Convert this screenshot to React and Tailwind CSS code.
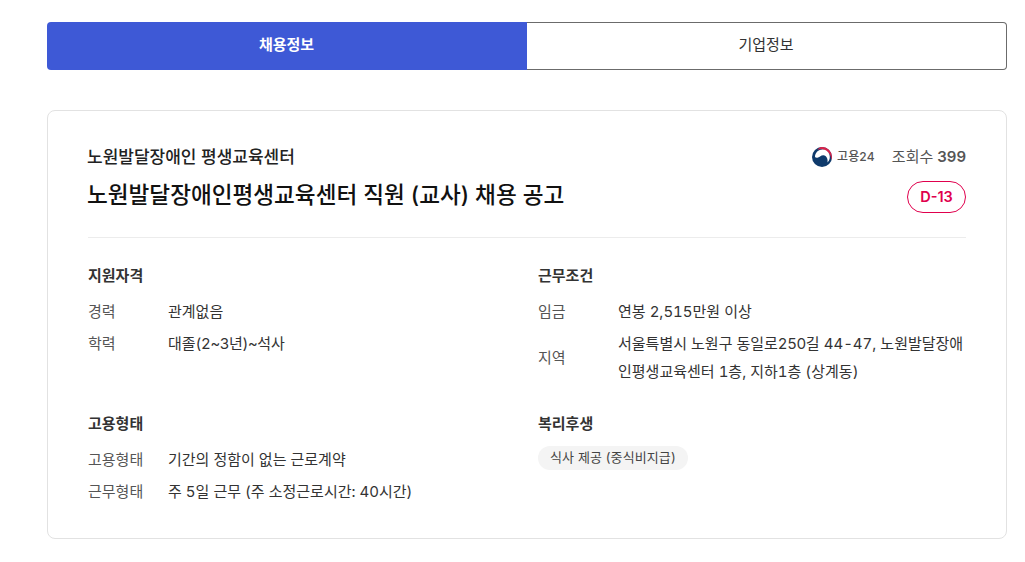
const Row = ({ label, children, center, className = "" }) => (
  <div className={`flex ${center ? "items-center" : "items-start"} ${className}`}>
    <div className="w-[80px] shrink-0 text-[15px] leading-[28px] text-[#555]">{label}</div>
    <div className="text-[15px] leading-[28px] text-[#333] flex-1 whitespace-nowrap tabular-nums">{children}</div>
  </div>
);

const Head = ({ children }) => (
  <h3 className="text-[15px] leading-[28px] font-semibold text-[#333] mb-[8px]">{children}</h3>
);

export default function App() {
  return (
    <div className="bg-white h-[562px] overflow-hidden px-[47px] pt-[22px] w-[1025px]" style={{ fontFamily: 'Inter, "Noto Sans CJK KR", sans-serif' }}>
      <div className="flex h-[48px] w-[960px]">
        <div className="w-[480px] bg-[#3e59d6] rounded-l-[4px] flex items-center justify-center text-white text-[15px] font-semibold pb-[1px] pr-[1px]">채용정보</div>
        <div className="w-[480px] bg-white border border-[#6b6b6b] border-l-0 rounded-r-[4px] flex items-center justify-center text-[#333] text-[15px] pb-[1px] pr-[1px]">기업정보</div>
      </div>

      <div className="mt-[40px] w-[960px] h-[429px] border border-[#e2e2e2] rounded-[8px] px-[40px] pt-[32px]">
        <div className="flex justify-between h-[95px] border-b border-[#ececec]">
          <div>
            <div className="text-[17px] leading-[28px] font-medium text-[#222] -ml-[1px]">노원발달장애인 평생교육센터</div>
            <div className="text-[22.6px] leading-[32px] mt-[8px] font-medium text-[#111] -ml-[1px]">노원발달장애인평생교육센터 직원 (교사) 채용 공고</div>
          </div>
          <div className="flex flex-col items-end">
            <div className="flex items-center h-[28px]">
              <svg width="20" height="20" viewBox="0 0 20 20" className="mr-[5px]">
                <circle cx="10" cy="10" r="10" fill="#0f3a6b" />
                <path d="M9.5 0A10 10 0 0 1 20 10C20 11 19.9 12 19.5 13C19.2 7.5 15 2.8 9.5 2.3C7.5 2.2 6.5 2.5 5.5 3C6.5 1 8 0.2 9.5 0Z" fill="#d8234a" />
                <path d="M3 10C3 5.6 6.5 2.6 10.5 2.6C14.5 2.6 17.8 6 17.8 10C17.8 12 17 14 15.5 15.5C16.2 12 14.5 8.5 11.5 8.2C9 8 8 10 6 10.6C4.8 11 3.6 10.8 3 10Z" fill="#fff" />
              </svg>
              <span className="text-[12px] font-medium text-[#555] tracking-[0.2px]">고용24</span>
              <span className="ml-[17px] text-[15px] text-[#555]">조회수</span>
              <span className="ml-[4px] text-[15px] font-semibold text-[#555]">399</span>
            </div>
            <div className="mt-[10px] w-[59px] h-[32px] rounded-full border border-[#e0004d] flex items-center justify-center text-[14.5px] font-semibold text-[#e0004d] pb-[1px]">D-13</div>
          </div>
        </div>

        <div className="grid grid-cols-[450px_1fr] mt-[24px]">
          <div>
            <Head>지원자격</Head>
            <Row label="경력">관계없음</Row>
            <Row label="학력" className="mt-[4px]">대졸<span className="tracking-[-0.4px]">(2~3년)~</span>석사</Row>
          </div>
          <div>
            <Head>근무조건</Head>
            <Row label="임금">연봉 2,515만원 이상</Row>
            <Row label="지역" center className="mt-[4px]">서울특별시 노원구 동일로<span className="tracking-[-0.4px]">250</span>길 44-47, 노원발달장애<br />인평생교육센터 1층, 지하1층 (상계동)</Row>
          </div>
          <div className="mt-[24px]">
            <Head>고용형태</Head>
            <Row label="고용형태">기간의 정함이 없는 근로계약</Row>
            <Row label="근무형태" className="mt-[4px]">주 5일 근무 (주 소정근로시간: 40시간)</Row>
          </div>
          <div className="mt-[24px]">
            <Head>복리후생</Head>
            <div className="flex">
              <div className="flex items-center h-[24px] px-[12px] rounded-full bg-[#f4f4f4] text-[13px] tracking-[0.1px] text-[#444] pb-[1px]">식사 제공 (중식비지급)</div>
            </div>
          </div>
        </div>
      </div>
    </div>
  );
}
